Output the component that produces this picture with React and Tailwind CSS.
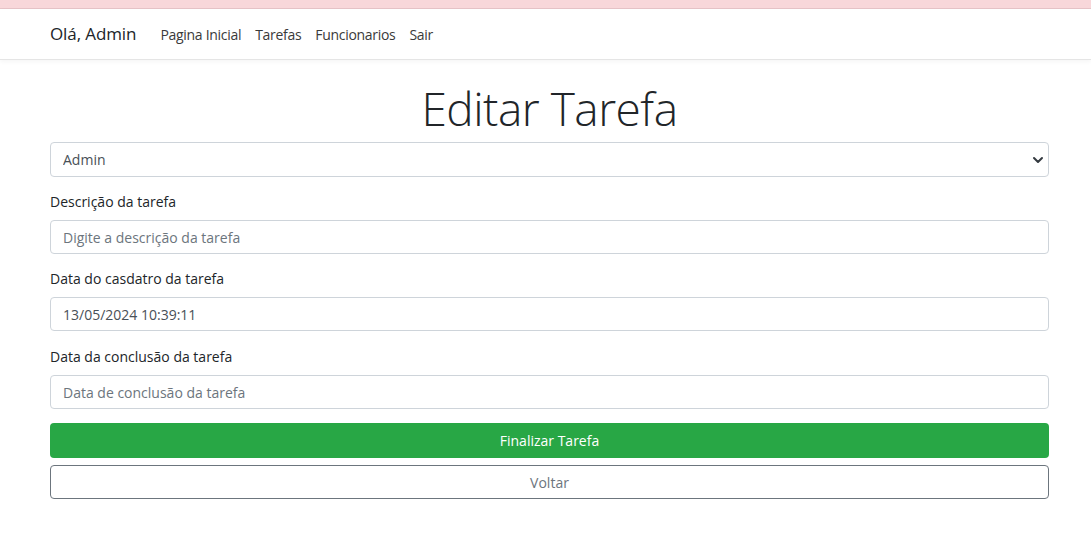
import { ChevronDown } from "lucide-react";

function Field({ label, children, mb = "mb-[14px]" }) {
  return (
    <div className={mb}>
      <label className="block mb-2 text-[14px] leading-[21px] text-[#212529]">{label}</label>
      {children}
    </div>
  );
}

const inputCls =
  "block w-full h-[34px] px-3 rounded border border-[#ced4da] bg-white text-[14px] text-[#495057] placeholder:text-[#6c757d] outline-none";

export default function App() {
  return (
    <div className="min-h-screen bg-white font-['Open_Sans',sans-serif]">
      {/* alert strip */}
      <div className="h-[9px] bg-[#f8d7da] border-b border-[#e6c3c7]" />

      {/* navbar */}
      <nav className="h-[51px] bg-white border-b border-[#e5e5e5] shadow-[0_2px_4px_rgba(0,0,0,0.04)] flex items-center px-[50px]">
        <span className="text-[17px] text-[#212529] mr-[24px] tracking-[-0.1px]">Olá, Admin</span>
        <div className="flex items-center gap-[14px] text-[14px] text-[#3a3a3a] tracking-[-0.3px]">
          <a>Pagina Inicial</a>
          <a>Tarefas</a>
          <a>Funcionarios</a>
          <a>Sair</a>
        </div>
      </nav>

      <main className="pl-[50px] pr-[42px]">
        <h1 className="text-center text-[46px] font-light leading-[56px] text-[#212529] mt-[20px] mb-[6px] tracking-[-0.5px]">
          Editar Tarefa
        </h1>

        <div className="mb-[14px] relative">
          <select className={inputCls + " h-[35px] appearance-none"} defaultValue="Admin">
            <option>Admin</option>
          </select>
          <ChevronDown className="absolute right-[3px] top-1/2 -translate-y-1/2 size-[16px] text-[#343a40] pointer-events-none" strokeWidth={3} />
        </div>

        <Field label="Descrição da tarefa">
          <input className={inputCls} placeholder="Digite a descrição da tarefa" />
        </Field>

        <Field label="Data do casdatro da tarefa" mb="mb-[15px]">
          <input className={inputCls} defaultValue="13/05/2024 10:39:11" />
        </Field>

        <Field label="Data da conclusão da tarefa">
          <input className={inputCls} placeholder="Data de conclusão da tarefa" />
        </Field>

        <button className="block w-full h-[35px] rounded bg-[#28a745] text-white text-[14px] mb-[7px]">
          Finalizar Tarefa
        </button>
        <button className="block w-full h-[34px] rounded border border-[#6c757d] bg-white text-[#6c757d] text-[14px]">
          Voltar
        </button>
      </main>
    </div>
  );
}
